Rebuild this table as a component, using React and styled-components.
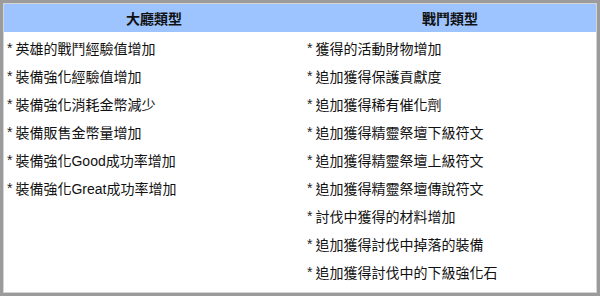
import React from "react";
import styled, { createGlobalStyle } from "styled-components";

const Global = createGlobalStyle`
  html, body { margin: 0; padding: 0; background: #fff; }
  body { font-family: "Liberation Sans", "Noto Sans CJK TC", sans-serif; }
`;

const Frame = styled.div`
  width: 600px;
  height: 296px;
  box-sizing: border-box;
  border: 3px solid #9b9b9b;
  background: #fff;
`;

const Inner = styled.div`
  height: 100%;
  box-sizing: border-box;
  border: 1px solid #d4d4d4;
  display: grid;
  grid-template-columns: 300px 292px;
  grid-template-rows: 28px 1fr;
`;

const HeadCell = styled.div`
  background: #9dc4ff;
  display: flex;
  align-items: center;
  justify-content: center;
  font-family: "Noto Sans CJK TC", sans-serif;
  font-weight: 700;
  font-size: 14px;
  color: #111;
`;

const Column = styled.ul`
  list-style: none;
  margin: 0;
  padding: 2px 0 0 3px;
`;

const Item = styled.li`
  height: 28px;
  display: flex;
  align-items: center;
  font-size: 14px;
  color: #111;
  white-space: nowrap;
`;

const Star = styled.span`
  font-family: "Liberation Sans", sans-serif;
  font-size: 14px;
  color: #222;
  margin-right: 3px;
`;

const left = [
  "英雄的戰鬥經驗值增加",
  "裝備強化經驗值增加",
  "裝備強化消耗金幣減少",
  "裝備販售金幣量增加",
  "裝備強化Good成功率增加",
  "裝備強化Great成功率增加",
];

const right = [
  "獲得的活動財物增加",
  "追加獲得保護貢獻度",
  "追加獲得稀有催化劑",
  "追加獲得精靈祭壇下級符文",
  "追加獲得精靈祭壇上級符文",
  "追加獲得精靈祭壇傳說符文",
  "討伐中獲得的材料增加",
  "追加獲得討伐中掉落的裝備",
  "追加獲得討伐中的下級強化石",
];

export default function App() {
  return (
    <>
      <Global />
      <Frame>
        <Inner>
          <HeadCell>大廳類型</HeadCell>
          <HeadCell>戰鬥類型</HeadCell>
          <Column>
            {left.map((t) => (
              <Item key={t}>
                <Star>*</Star>
                {t}
              </Item>
            ))}
          </Column>
          <Column>
            {right.map((t) => (
              <Item key={t}>
                <Star>*</Star>
                {t}
              </Item>
            ))}
          </Column>
        </Inner>
      </Frame>
    </>
  );
}
